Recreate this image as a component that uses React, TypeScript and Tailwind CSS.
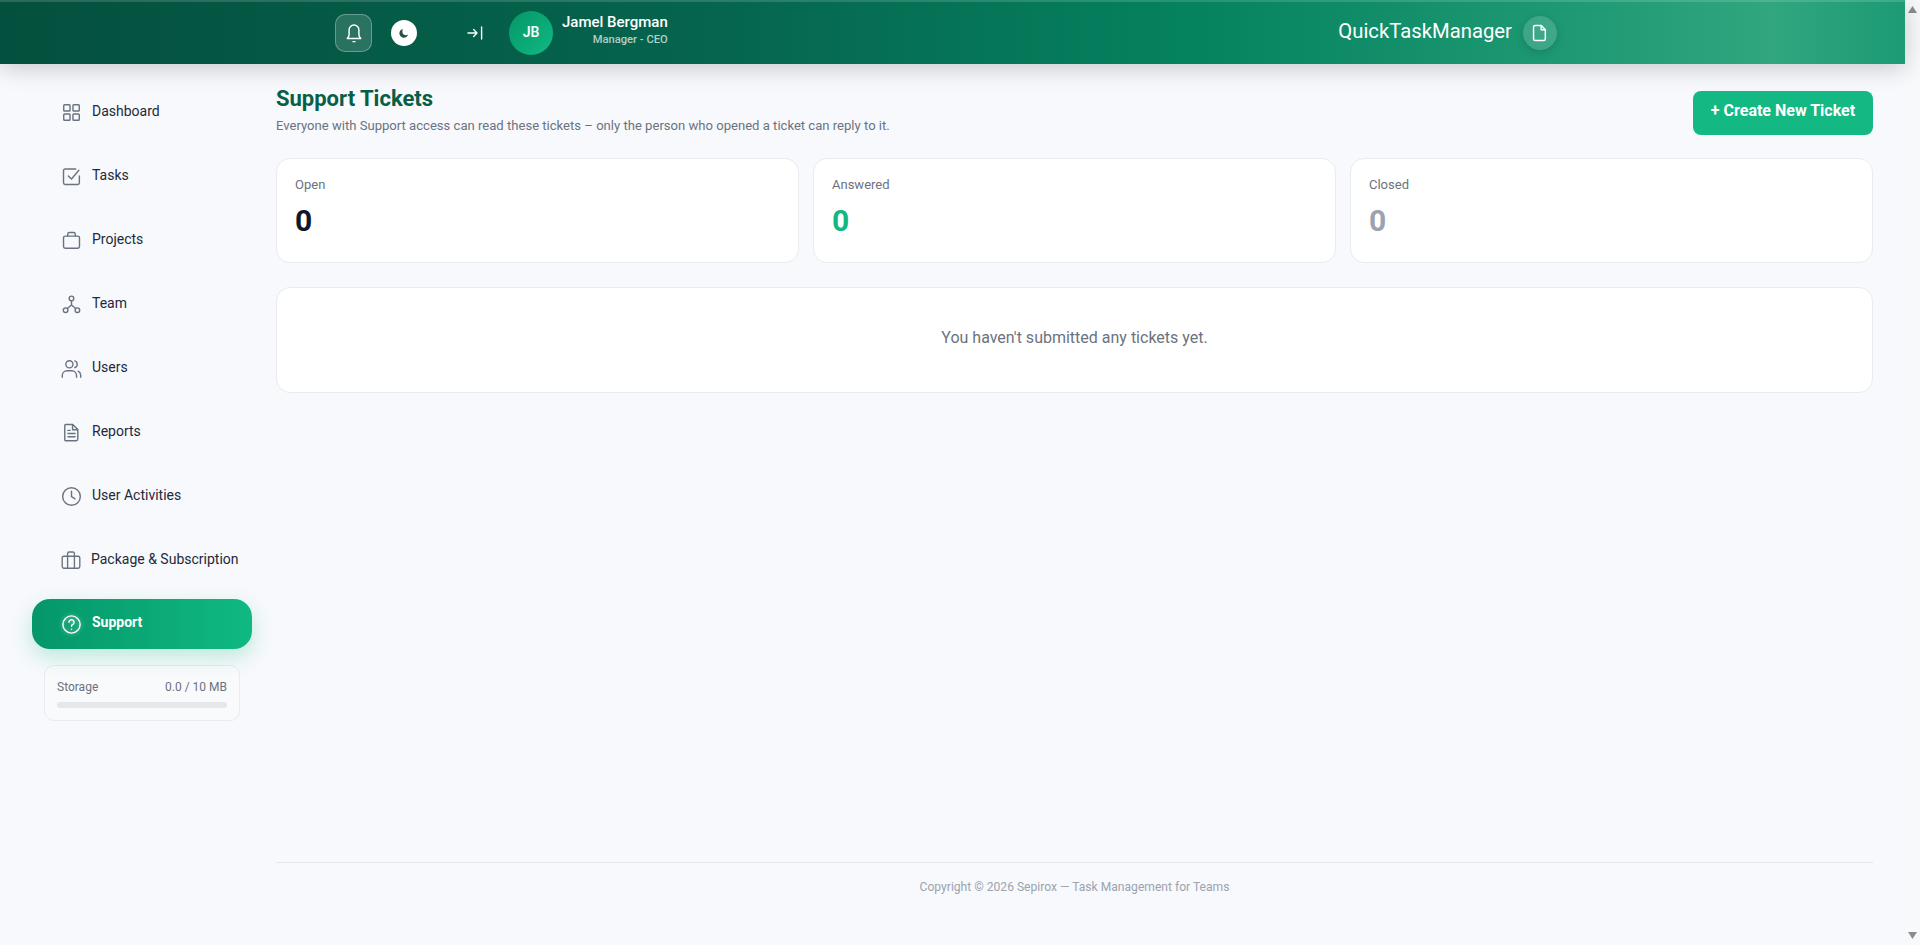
import type { ReactNode } from 'react'

const font = { fontFamily: 'Roboto, sans-serif' }

function Svg({ children, size = 21 }: { children: ReactNode; size?: number }) {
  return (
    <svg
      width={size}
      height={size}
      viewBox="0 0 20 20"
      fill="none"
      stroke="currentColor"
      strokeWidth="1.35"
      strokeLinecap="round"
      strokeLinejoin="round"
    >
      {children}
    </svg>
  )
}

const NAV: { label: string; icon: ReactNode }[] = [
  {
    label: 'Dashboard',
    icon: (
      <Svg>
        <rect x="2.6" y="2.6" width="6" height="6" rx="0.8" />
        <rect x="11.4" y="2.6" width="6" height="6" rx="0.8" />
        <rect x="2.6" y="11.4" width="6" height="6" rx="0.8" />
        <rect x="11.4" y="11.4" width="6" height="6" rx="0.8" />
      </Svg>
    ),
  },
  {
    label: 'Tasks',
    icon: (
      <Svg>
        <path d="M17.5 9.5V16a1.6 1.6 0 0 1-1.6 1.6H4A1.6 1.6 0 0 1 2.4 16V4.4A1.6 1.6 0 0 1 4 2.8h10" />
        <path d="M7 9.5l3 2.8 7-8.2" />
      </Svg>
    ),
  },
  {
    label: 'Projects',
    icon: (
      <Svg>
        <rect x="2.4" y="5.8" width="15.2" height="11.6" rx="1.6" />
        <path d="M6.4 5.8V4a1.6 1.6 0 0 1 1.6-1.6h4A1.6 1.6 0 0 1 13.6 4v1.8" />
      </Svg>
    ),
  },
  {
    label: 'Team',
    icon: (
      <Svg>
        <circle cx="10" cy="4.2" r="2.2" />
        <circle cx="4.4" cy="15.4" r="2.2" />
        <circle cx="15.6" cy="15.4" r="2.2" />
        <path d="M10 6.4v4M10 10.4l-4 3.4M10 10.4l4 3.4" />
      </Svg>
    ),
  },
  {
    label: 'Users',
    icon: (
      <Svg>
        <circle cx="8" cy="6" r="3.4" />
        <path d="M1.2 18.4v-1.6a4.6 4.6 0 0 1 4.6-4.6h4.4a4.6 4.6 0 0 1 4.6 4.6v1.6" />
        <path d="M13.2 2.8a3.4 3.4 0 0 1 0 6.4M16.4 12.6a4.6 4.6 0 0 1 2.4 4v1.8" />
      </Svg>
    ),
  },
  {
    label: 'Reports',
    icon: (
      <Svg>
        <path d="M4.4 2.4h6.8l4.8 4.8v9a1.6 1.6 0 0 1-1.6 1.6H4.4A.8.8 0 0 1 3.6 17V3.2a.8.8 0 0 1 .8-.8z" />
        <path d="M11 2.6v4.8h4.8M6.6 8h2M6.6 11h6.8M6.6 14h6.8" />
      </Svg>
    ),
  },
  {
    label: 'User Activities',
    icon: (
      <Svg>
        <circle cx="10" cy="10" r="8.4" />
        <path d="M10 5v5.2l3.4 2" />
      </Svg>
    ),
  },
  {
    label: 'Package & Subscription',
    icon: (
      <Svg size={20}>
        <rect x="1.2" y="6.2" width="17.6" height="12" rx="1.6" />
        <path d="M6.6 6.2v12M13.4 6.2v12M6.6 6.2V3.6a1.6 1.6 0 0 1 1.6-1.6h3.6a1.6 1.6 0 0 1 1.6 1.6v2.6" />
      </Svg>
    ),
  },
]

function NavItem({ label, icon }: { label: string; icon: ReactNode }) {
  return (
    <div className="flex h-[50px] items-center gap-[10.5px] pl-[28.5px] text-[#6b7280] [&:last-child]:gap-2.5">
      {icon}
      <span className="mb-[2px] text-sm whitespace-nowrap text-[#1e293b]">{label}</span>
    </div>
  )
}

function Stat({ label, color }: { label: string; color: string }) {
  return (
    <div className="h-[105px] rounded-[14px] border border-[#e8ebf0] bg-white p-[18px]">
      <p className="text-[13px] leading-4 text-[#6b7280]">{label}</p>
      <p className={`mt-2.5 text-3xl leading-9 font-bold ${color}`}>0</p>
    </div>
  )
}

function Scrollbar() {
  return (
    <div className="flex w-[15px] flex-col items-center justify-between bg-[#f8f9fb] py-[6px]">
      <svg width="9" height="7" viewBox="0 0 9 7">
        <path d="M4.5 0L9 7H0z" fill="#8c8c8c" />
      </svg>
      <svg width="9" height="7" viewBox="0 0 9 7">
        <path d="M0 0h9L4.5 7z" fill="#8c8c8c" />
      </svg>
    </div>
  )
}

export default function App() {
  return (
    <div style={font} className="flex h-[945px] overflow-hidden bg-[#f7f9fc]">
      <div className="flex w-[1905px] flex-col">
        <header className="relative z-10 flex h-16 items-center justify-between border-t-2 border-white/15 bg-[linear-gradient(90deg,#04503e_0%,#05654e_38%,#05835f_63%,#1f9a74_83%,#31a67f_93%,#1c9b74_100%)] pr-[348px] pl-[335px] shadow-[0_4px_24px_rgba(0,0,0,0.2)]">
          <div className="flex items-center">
            <button className="flex h-[38px] w-[37px] items-center justify-center rounded-[10px] border border-white/30 bg-white/15 text-white">
              <svg width="24" height="24" viewBox="0 0 20 20" fill="none" stroke="currentColor" strokeWidth="1.2" strokeLinecap="round" strokeLinejoin="round">
                <path d="M4.4 14.6c.9-1 1.5-2 1.5-3.4V7.4a4.1 4.1 0 0 1 8.2 0v3.8c0 1.4.6 2.4 1.5 3.4z" />
                <path d="M9.2 17.2h1.6" />
              </svg>
            </button>
            <button className="ml-[19px] flex h-[26px] w-[26px] items-center justify-center rounded-full bg-white">
              <svg width="12" height="12" viewBox="0 0 14 14">
                <path d="M5.6 2.2A5.2 5.2 0 1 0 11.8 8.8C9.6 10.2 6.8 9.8 5.6 7.6 4.9 6 5 3.8 5.6 2.2z" fill="#2b4f45" />
              </svg>
            </button>
            <svg className="ml-[50px]" width="16" height="14" viewBox="0 0 16 14" fill="none" stroke="white" strokeWidth="1.4" strokeLinecap="round" strokeLinejoin="round">
              <path d="M1 7h9M6.6 3.6L10 7l-3.4 3.4M14.6 1v12" />
            </svg>
            <div className="ml-[26px] flex h-[44px] w-[44px] items-center justify-center rounded-full bg-[linear-gradient(135deg,#059669,#10b981)] pb-[2px] text-sm font-semibold text-white">
              JB
            </div>
            <div className="mb-[7px] ml-[9px] flex flex-col items-end">
              <span className="text-[15px] leading-5 font-medium whitespace-nowrap text-white">Jamel Bergman</span>
              <span className="text-[11.2px] leading-4 font-medium whitespace-nowrap text-white/70">Manager - CEO</span>
            </div>
          </div>
          <div className="flex items-center gap-[11px]">
            <span className="mb-1 text-[20.3px] leading-7 whitespace-nowrap text-white">QuickTaskManager</span>
            <div className="flex h-[34px] w-[34px] items-center justify-center rounded-full bg-white/15 text-white shadow-[0_2px_8px_rgba(0,0,0,0.15)]">
              <svg width="20" height="20" viewBox="0 0 18 18" fill="none" stroke="currentColor" strokeWidth="1.3" strokeLinecap="round" strokeLinejoin="round">
                <path d="M4.6 2.2h5.6l3.6 3.8v8.4a1.4 1.4 0 0 1-1.4 1.4H4.6a1.4 1.4 0 0 1-1.4-1.4V3.6a1.4 1.4 0 0 1 1.4-1.4z" />
                <path d="M10 2.4V6h3.6" />
              </svg>
            </div>
          </div>
        </header>

        <div className="flex flex-1">
          <aside className="w-[276px] shrink-0 pt-[23px]">
            <nav className="ml-8 flex w-[220px] flex-col gap-3.5">
              {NAV.map((item) => (
                <NavItem key={item.label} {...item} />
              ))}
              <div className="flex h-[50px] items-center gap-[10.5px] rounded-[18px] bg-[linear-gradient(90deg,#059669,#10b981)] pl-[28.5px] text-white shadow-[0_8px_20px_rgba(16,185,129,0.25)]">
                <span className="drop-shadow-[0_0_2px_rgba(255,255,255,0.5)]">
                  <Svg>
                    <circle cx="10" cy="10" r="8.2" />
                    <path d="M7.6 7.8a2.4 2.4 0 1 1 3.6 2.1c-.8.5-1.2 1-1.2 1.7M10 14.4v.1" />
                  </Svg>
                </span>
                <span className="mb-1 text-sm font-bold">Support</span>
              </div>
            </nav>
            <div className="mt-4 ml-11 w-[196px] rounded-[10px] border border-[#e8ebf0] bg-[#f9fafc] px-3 pt-[13px] pb-3">
              <div className="flex justify-between text-xs leading-4 text-[#6b7280]">
                <span>Storage</span>
                <span>0.0 / 10 MB</span>
              </div>
              <div className="mt-[7px] h-1.5 rounded-full bg-[#e5e7eb]" />
            </div>
          </aside>

          <main className="flex flex-1 flex-col pr-8">
            <div className="flex items-start justify-between pt-[19px]">
              <div>
                <h1 className="text-[22px] leading-8 font-bold text-[#065f46]">Support Tickets</h1>
                <p className="mt-[1px] text-[13.08px] leading-5 text-[#6b7280]">
                  Everyone with Support access can read these tickets – only the person who opened a ticket can reply to it.
                </p>
              </div>
              <button className="mt-2 h-[44px] w-[180px] rounded-lg bg-[#14b882] pb-1 text-base font-bold text-white">
                + Create New Ticket
              </button>
            </div>

            <div className="mt-[22px] grid grid-cols-3 gap-3.5">
              <Stat label="Open" color="text-[#0f172a]" />
              <Stat label="Answered" color="text-[#10b981]" />
              <Stat label="Closed" color="text-[#9ca3af]" />
            </div>

            <div className="mt-6 flex h-[106px] items-center justify-center rounded-[14px] border border-[#e8ebf0] bg-white pb-1 text-base text-[#6b7280]">
              You haven't submitted any tickets yet.
            </div>

            <footer className="mt-auto h-[83px] border-t border-[#e5e7eb] pt-4 text-center text-[12.1px] leading-4 text-[#9ca3af]">
              Copyright © 2026 Sepirox — Task Management for Teams
            </footer>
          </main>
        </div>
      </div>
      <Scrollbar />
    </div>
  )
}
